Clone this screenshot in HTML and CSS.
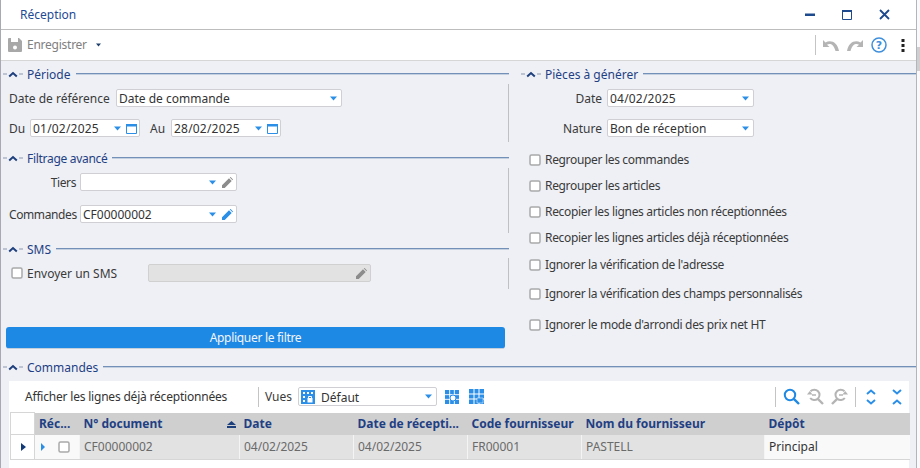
FILE: index.html
```html
<!DOCTYPE html>
<html lang="fr">
<head>
<meta charset="utf-8">
<title>Réception</title>
<link rel="stylesheet" href="styles.css">
</head>
<body>
<svg class="defs" width="0" height="0">
  <defs>
    <symbol id="chev" viewBox="0 0 20 8"><path d="M0 4h4M16 4h4" stroke="#8b97ad" stroke-width="1" fill="none"/><path d="M6.200 6.500 10 3l3.800 3.500" stroke="#1d3f7c" stroke-width="2" fill="none"/></symbol>
    <symbol id="caret" viewBox="0 0 7 5"><path d="M0 .5h7L3.500 4.500z" fill="#2b8fe8"/></symbol>
    <symbol id="cal" viewBox="0 0 11 11"><path d="M.5 1.500h10v9H.5z" fill="none" stroke="#2b8fe8"/><path d="M0 1h11v2.500H0z" fill="#2b8fe8"/></symbol>
    <symbol id="pen" viewBox="0 0 11 11"><path d="M0 11V8.300L7 1.300 9.700 4 2.700 11zM7.800.5 8.600 0 11 2.400 10.500 3.200z"/></symbol>
    <symbol id="tick" viewBox="0 0 12 12"><rect x="1" y="1" width="10" height="10" rx="1.500" fill="#fff" stroke="#a9a9a9" stroke-width="1.500"/></symbol>
    <symbol id="grid" viewBox="0 0 15 15"><path d="M0 0h15v15H0z" fill="#2b8fe8"/><path d="M5 0v15M10 0v15M0 5h15M0 10h15" stroke="#fff"/></symbol>
    <symbol id="glass" viewBox="0 0 17 17"><circle cx="7" cy="7" r="5.200" fill="none" stroke="currentColor" stroke-width="2"/><path d="M10.800 10.800 16 16" stroke="currentColor" stroke-width="2.400"/></symbol>
    <symbol id="glassback" viewBox="0 0 17 17"><path d="M3.500 3.300A5.200 5.200 0 1 1 3.200 10" fill="none" stroke="currentColor" stroke-width="2"/><path d="M0 6.500h5.500L2.800 3z" fill="currentColor"/><path d="M10.800 10.800 16 16" stroke="currentColor" stroke-width="2.400"/><path d="M5 7h4" stroke="currentColor" stroke-width="1.500"/></symbol>
    <symbol id="expand" viewBox="0 0 12 16"><path d="M2 5 6 1.500 10 5M2 11 6 14.500 10 11" fill="none" stroke="#2b8fe8" stroke-width="2"/></symbol>
    <symbol id="collapse" viewBox="0 0 12 16"><path d="M2 1 6 4.500 10 1M2 15 6 11.500 10 15" fill="none" stroke="#2b8fe8" stroke-width="2"/></symbol>
  </defs>
</svg>
<div class="screen">
  <div class="window">
    <header class="titlebar">
      <span class="title">Réception</span>
      <div class="winctl">
        <svg width="10" height="10" viewBox="0 0 10 10"><path d="M0 3.500h10v2.500H0z" fill="#1d4a8f"/></svg>
        <svg width="10" height="10" viewBox="0 0 10 10"><path d="M.5 1.500h9v8h-9z" fill="none" stroke="#1d4a8f"/><path d="M0 0h10v2H0z" fill="#1d4a8f"/></svg>
        <svg width="11" height="11" viewBox="0 0 11 11"><path d="M1 1l9 9M10 1l-9 9" stroke="#1d4a8f" stroke-width="1.800"/></svg>
      </div>
    </header>
    <div class="toolbar">
      <svg class="save" width="14" height="14" viewBox="0 0 14 14"><path d="M0 1a1 1 0 0 1 1-1h10l3 3v10a1 1 0 0 1-1 1H1a1 1 0 0 1-1-1z" fill="#a8a8a8"/><path d="M3 0h7v4H3z" fill="#fff"/><circle cx="7" cy="9.500" r="2" fill="#fff"/></svg>
      <span class="save-label">Enregistrer</span>
      <svg class="save-caret" width="5" height="4" viewBox="0 0 5 4"><path d="M0 .5h5L2.500 3.500z" fill="#1d3f6c"/></svg>
      <div class="tool-right">
        <i class="vsep tall"></i>
        <svg width="16" height="11" viewBox="0 0 16 11"><path d="M0 0v7h6.500L4 4.800C6.800 3.200 10.500 4 12.500 11H16C14.500 2.500 8 -.5 2.500 2.500z" fill="#b4b4b4"/></svg>
        <svg class="redo" width="16" height="11" viewBox="0 0 16 11"><path d="M16 0v7H9.500L12 4.800C9.200 3.200 5.500 4 3.500 11H0C1.500 2.500 8 -.5 13.500 2.500z" fill="#b4b4b4"/></svg>
        <svg class="help" width="16" height="16" viewBox="0 0 16 16"><circle cx="8" cy="8" r="7" fill="none" stroke="#3f8fdc" stroke-width="1.500"/><text x="8" y="12" text-anchor="middle" class="help-q">?</text></svg>
        <svg class="dots" width="4" height="13" viewBox="0 0 4 13"><path d="M.5 0h3v3h-3zM.5 5h3v3h-3zM.5 10h3v3h-3z" fill="#222"/></svg>
      </div>
    </div>
    <main class="content">
      <div class="top">
        <div class="left">
          <h2 class="sec"><svg class="chev"><use href="#chev"/></svg><span>Période</span><i class="rule"></i></h2>
          <div class="body b-periode">
            <div class="row">
              <label class="lbl l-ref">Date de référence</label>
              <div class="field w-ref"><span>Date de commande</span><svg class="caret"><use href="#caret"/></svg></div>
            </div>
            <div class="row r-dates">
              <label class="lbl l-du">Du</label>
              <div class="field w-date"><span class="num">01/02/2025</span><svg class="caret"><use href="#caret"/></svg><svg class="cal"><use href="#cal"/></svg></div>
              <label class="lbl l-au">Au</label>
              <div class="field w-date"><span class="num">28/02/2025</span><svg class="caret"><use href="#caret"/></svg><svg class="cal"><use href="#cal"/></svg></div>
            </div>
          </div>
          <h2 class="sec s-next"><svg class="chev"><use href="#chev"/></svg><span class="tight">Filtrage avancé</span><i class="rule"></i></h2>
          <div class="body b-filtre">
            <div class="row">
              <label class="lbl l-tiers">Tiers</label>
              <div class="field w-tiers"><span></span><svg class="caret"><use href="#caret"/></svg><svg class="pen off"><use href="#pen"/></svg></div>
            </div>
            <div class="row r-cmd">
              <label class="lbl l-tiers">Commandes</label>
              <div class="field w-tiers"><span>CF00000002</span><svg class="caret"><use href="#caret"/></svg><svg class="pen on"><use href="#pen"/></svg></div>
            </div>
          </div>
          <h2 class="sec s-next"><svg class="chev"><use href="#chev"/></svg><span>SMS</span><i class="rule"></i></h2>
          <div class="body b-sms">
            <div class="row">
              <svg class="tick t-sms"><use href="#tick"/></svg>
              <label class="lbl l-sms">Envoyer un SMS</label>
              <div class="field w-sms"><span></span><svg class="pen off"><use href="#pen"/></svg></div>
            </div>
          </div>
          <button class="apply">Appliquer le filtre</button>
        </div>
        <div class="right">
          <h2 class="sec"><svg class="chev"><use href="#chev"/></svg><span>Pièces à générer</span><i class="rule"></i></h2>
          <div class="rbody">
            <div class="row">
              <label class="lbl l-r">Date</label>
              <div class="field w-r"><span class="num">04/02/2025</span><svg class="caret"><use href="#caret"/></svg></div>
            </div>
            <div class="row r-dates">
              <label class="lbl l-r">Nature</label>
              <div class="field w-r"><span>Bon de réception</span><svg class="caret"><use href="#caret"/></svg></div>
            </div>
            <ul class="checks">
              <li><svg class="tick"><use href="#tick"/></svg>Regrouper les commandes</li>
              <li><svg class="tick"><use href="#tick"/></svg>Regrouper les articles</li>
              <li><svg class="tick"><use href="#tick"/></svg>Recopier les lignes articles non réceptionnées</li>
              <li><svg class="tick"><use href="#tick"/></svg>Recopier les lignes articles déjà réceptionnées</li>
              <li class="c27"><svg class="tick"><use href="#tick"/></svg>Ignorer la vérification de l'adresse</li>
              <li class="c29"><svg class="tick"><use href="#tick"/></svg>Ignorer la vérification des champs personnalisés</li>
              <li class="c31"><svg class="tick"><use href="#tick"/></svg>Ignorer le mode d'arrondi des prix net HT</li>
            </ul>
          </div>
        </div>
      </div>
      <h2 class="sec s-cmd"><svg class="chev"><use href="#chev"/></svg><span>Commandes</span><i class="rule"></i></h2>
      <section class="panel">
        <div class="gridbar">
          <span class="show">Afficher les lignes déjà réceptionnées</span>
          <i class="vsep"></i>
          <span class="vues">Vues</span>
          <div class="field w-vues">
            <svg class="vicon" width="14" height="14" viewBox="0 0 14 14"><path d="M0 0h14v14H0z" fill="#2b8fe8"/><path d="M2 2h2v2H2zM6 2h2v2H6zM10 2h2v2h-2zM2 6h2v2H2zM2 10h2v2H2z" fill="#fff"/><path d="M6.500 8h5v4.500h-5z" fill="#fff"/><path d="M7.500 8V6.500h3V8" fill="none" stroke="#fff"/></svg>
            <span class="vname">Défaut</span><svg class="caret"><use href="#caret"/></svg>
          </div>
          <svg class="g1" width="14" height="14"><use href="#grid"/><circle cx="8" cy="8" r="3" fill="#fff" stroke="#2b8fe8"/></svg>
          <svg class="g2" width="15" height="15"><use href="#grid"/><path d="M8 9h6v5H8z" fill="#2b8fe8" stroke="#fff" stroke-width=".5"/></svg>
          <div class="gridtools">
            <i class="vsep"></i>
            <svg class="gl on" width="17" height="17"><use href="#glass"/></svg>
            <svg class="gl off" width="17" height="17"><use href="#glassback"/></svg>
            <svg class="gl off flip" width="17" height="17"><use href="#glassback"/></svg>
            <i class="vsep"></i>
            <svg class="ex" width="12" height="16"><use href="#expand"/></svg>
            <svg class="ex" width="12" height="16"><use href="#collapse"/></svg>
          </div>
        </div>
        <table class="table">
          <colgroup><col class="c0"><col class="c1"><col class="c2"><col class="c3"><col class="c3"><col class="c3"><col class="c4"><col></colgroup>
          <thead>
            <tr><th class="corner"></th><th>Réc...</th><th class="sort">N° document<svg width="9" height="7" viewBox="0 0 9 7"><path d="M0 4 4.500 0 9 4zM0 5h9v2H0z" fill="#1d3f7c"/></svg></th><th>Date</th><th>Date de récepti...</th><th>Code fournisseur</th><th>Nom du fournisseur</th><th>Dépôt</th></tr>
          </thead>
          <tbody>
            <tr><td class="hd"><svg width="5" height="8" viewBox="0 0 5 8"><path d="M0 0l5 4-5 4z" fill="#123a78"/></svg></td><td class="rec"><svg width="4" height="8" viewBox="0 0 4 8"><path d="M0 0l4 4-4 4z" fill="#2b8fe8"/></svg><svg class="tick t-rec"><use href="#tick"/></svg></td><td>CF00000002</td><td>04/02/2025</td><td>04/02/2025</td><td>FR00001</td><td>PASTELL</td><td class="live">Principal</td></tr>
          </tbody>
        </table>
      </section>
    </main>
  </div>
  <div class="scroll"><i></i></div>
</div>
</body>
</html>
```
FILE: styles.css
```css
* { box-sizing: border-box; }
html, body { margin: 0; height: 100%; overflow: hidden; }
body { font: 12px/14px "Noto Sans", sans-serif; color: #3a3a3a; background: #fff; }
.defs { position: absolute; }
.screen { display: flex; height: 468px; width: 920px; }
.window { width: 917px; flex: none; display: flex; flex-direction: column; border-left: 1px solid #a9a9b4; border-right: 1px solid #b4b4bc; }
.scroll { flex: 1; background: #fafafa; padding-top: 47px; }
.scroll i { display: block; height: 24px; background: #cfcfcf; }

.titlebar { height: 30px; flex: none; display: flex; align-items: center; border-bottom: 1px solid #bdbdbd; padding-left: 19px; }
.title { color: #1f4a96; }
.winctl { margin-left: auto; display: flex; align-items: center; gap: 27px; margin-right: 26px; }
.toolbar { height: 31px; flex: none; display: flex; align-items: center; border-bottom: 1px solid #d6d6d6; padding-left: 7px; }
.save-label { margin-left: 5px; color: #808080; letter-spacing: -.25px; }
.save-caret { margin-left: 9px; }
.tool-right { margin-left: auto; display: flex; align-items: center; }
.tool-right svg { flex: none; }
.redo { margin-left: 8px; }
.help { margin-left: 8px; }
.help-q { font: bold 11px "DejaVu Sans", sans-serif; fill: #3f8fdc; }
.dots { margin: 0 11px 0 14px; }
.vsep { display: block; width: 1px; height: 20px; background: #c4c4c4; flex: none; }
.vsep.tall { margin-right: 7px; }

.content { flex: 1; background: #eef0f5; padding-top: 5px; display: flex; flex-direction: column; min-height: 0; }
.top { display: flex; }
.left { width: 508px; flex: none; }
.right { flex: 1; padding-left: 10px; }

.sec { display: flex; align-items: center; height: 16px; margin: 0; font: inherit; color: #1f3f84; padding-left: 1px; }
.sec .chev { width: 20px; height: 8px; flex: none; margin-right: 4px; margin-left: 1px; }
.sec span { flex: none; margin-right: 5px; padding-top: 2px; }
.sec .tight { letter-spacing: -.3px; }
.rule { flex: 1; height: 2px; border-top: 1px solid #7390b8; border-bottom: 1px solid #c4cfe0; margin-top: -1px; }
.s-next { margin-top: 8px; }
.s-cmd { margin-top: 10px; }

.body { margin-top: 2px; margin-right: 0; border-right: 1px solid #bfbfc4; padding-left: 8px; }
.b-periode { padding: 5px 0 5px 8px; height: 58px; }
.b-filtre { padding: 5px 0 0 8px; height: 65px; }
.b-sms { padding: 6px 0 0 10px; height: 31px; margin-top: 1px; }

.row { display: flex; align-items: center; height: 18px; }
.r-dates { margin-top: 12px; }
.r-cmd { margin-top: 14px; }
.lbl { flex: none; color: #3a3a3a; padding-top: 2px; }
.l-ref { width: 107px; }
.l-du { width: 21px; }
.l-au { width: 21px; margin-left: 10px; }
.l-tiers { width: 67px; text-align: right; margin-right: 4px; letter-spacing: -.4px; }
.l-sms { margin-left: 4px; width: 121px; }
.l-r { width: 83px; text-align: right; margin-right: 5px; }

.field { display: flex; align-items: center; height: 18px; background: #fff; border: 1px solid #cfcfd4; border-radius: 2px; padding: 0 3px 0 2px; color: #333; flex: none; }
.field > span { flex: 1; white-space: nowrap; padding-top: 2px; }
.field .num { letter-spacing: .2px; }
.w-ref { width: 226px; }
.w-date { width: 110px; padding-right: 2px; }
.w-tiers { width: 157px; }
.w-sms { width: 223px; background: #e2e2e2; border-color: #d0d0d0; }
.w-r { width: 147px; }
.w-vues { width: 139px; height: 19px; margin-left: 6px; }
.caret { width: 7px; height: 5px; flex: none; margin-right: 1px; }
.cal { width: 11px; height: 11px; flex: none; margin-left: 4px; }
.pen { width: 11px; height: 11px; flex: none; margin-left: 5px; }
.pen.off { fill: #8c8c8c; }
.pen.on { fill: #2b8fe8; }
.tick { width: 12px; height: 12px; flex: none; }

.apply { display: block; width: 499px; height: 22px; margin: 38px 0 0 5px; background: #1e88e5; color: #f2f6fc; border: 0; border-bottom: 1px solid #c4cfdc; border-radius: 3px; font: inherit; padding: 0; letter-spacing: -.3px; }

.rbody { margin-top: 7px; padding-left: 0; }
.checks { list-style: none; margin: 10px 0 0 11px; padding: 0; color: #3a3a3a; letter-spacing: -.33px; }
.checks li { display: flex; align-items: center; height: 26px; white-space: nowrap; }
.checks li.c27 { height: 27px; }
.checks li.c29 { height: 31px; }
.checks li.c31 { height: 31px; }
.checks .tick { margin-right: 4px; margin-left: -1px; }

.panel { margin: 6px 7px 0 8px; background: #fff; flex: 1; min-height: 0; }
.gridbar { height: 31px; display: flex; align-items: center; padding-left: 16px; }
.show { width: 233px; flex: none; color: #333; letter-spacing: -.2px; }
.vues { margin-left: 6px; }
.vicon { flex: none; margin-right: 6px; }
.vname { flex: 1; }
.g1 { margin-left: 8px; flex: none; }
.g2 { margin-left: 10px; flex: none; }
.gridtools { margin-left: auto; display: flex; align-items: center; gap: 7px; }
.gl.on { color: #1e88e5; }
.gl.off { color: #b4b4b4; }
.flip { transform: scaleX(-1); }
.ex { margin: 0 6px 0 0; }
.ex + .ex { margin-left: 1px; }
.gridtools .vsep + .ex { margin-left: 2px; }

.table { width: 900px; margin-left: 1px; table-layout: fixed; border-collapse: collapse; }
.c0 { width: 24px; }
.c1 { width: 45px; }
.c2 { width: 160px; }
.c3 { width: 114px; }
.c4 { width: 183px; }
.table th { height: 22px; background: #cfcfcf; color: #1f3f84; font-weight: bold; text-align: left; padding: 0 4px; white-space: nowrap; overflow: hidden; }
.table th.corner { background: #fff; border: 1px solid #d6d6d6; border-bottom: 0; }
.table th.sort svg { float: right; margin-top: 4px; }
.table td { height: 25px; background: #e2e2e2; color: #6a6a6a; padding: 0 4px; border-left: 1px solid #f4f4f4; border-bottom: 1px solid #d6d6d6; white-space: nowrap; }
.table td.hd { background: #fff; border: 1px solid #d6d6d6; padding-left: 10px; }
.table td.rec { background: #f9f9f9; padding-left: 6px; }
.table td.live { background: #f9f9f9; color: #333; }
.t-rec { margin-left: 13px; vertical-align: -2px; }
.table svg { display: inline-block; }
```
